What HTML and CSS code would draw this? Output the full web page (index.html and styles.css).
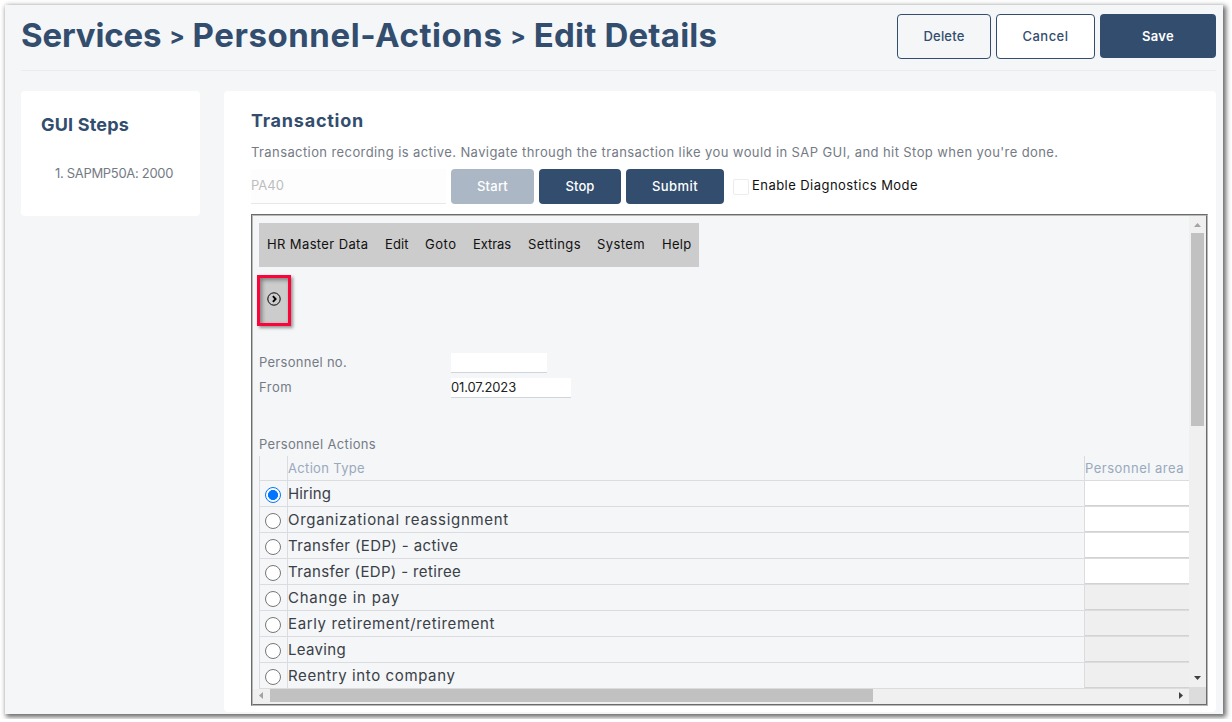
FILE: index.html
```
<!DOCTYPE html>
<html lang="en">
<head>
<meta charset="utf-8">
<title>Services - Personnel-Actions - Edit Details</title>
<link rel="stylesheet" href="styles.css">
</head>
<body>
<div class="window">
  <header class="page-header">
    <h1><span class="crumb-root">Services</span> <span class="sep">&gt;</span> <span class="crumb-section">Personnel-Actions</span> <span class="sep">&gt;</span> <span class="crumb-page">Edit Details</span></h1>
    <div class="header-actions">
      <button class="btn outline delete">Delete</button>
      <button class="btn outline cancel">Cancel</button>
      <button class="btn save">Save</button>
    </div>
  </header>
  <div class="columns">
    <aside class="card steps">
      <h2>GUI Steps</h2>
      <div class="step">1. SAPMP50A: 2000</div>
    </aside>
    <main class="card transaction">
      <h2>Transaction</h2>
      <p class="hint">Transaction recording is active. Navigate through the transaction like you would in SAP GUI, and hit Stop when you're done.</p>
      <div class="controls">
        <div class="code">PA40</div>
        <button class="btn small start">Start</button>
        <button class="btn small stop">Stop</button>
        <button class="btn small submit">Submit</button>
        <span class="checkbox"></span>
        <span class="check-label">Enable Diagnostics Mode</span>
      </div>
      <div class="frame">
        <div class="frame-inner">
          <div class="screen">
            <nav class="menu">
              <span class="m-hr">HR Master Data</span><span class="m-edit">Edit</span><span class="m-goto">Goto</span><span class="m-extras">Extras</span><span class="m-settings">Settings</span><span class="m-system">System</span><span class="m-help">Help</span>
            </nav>
            <div class="highlight">
              <svg width="14" height="14" viewBox="0 0 14 14" fill="none" stroke="#000"><circle cx="7" cy="7" r="6.2" stroke-width="1"/><path d="M5.900 4.200 8.600 7 5.900 9.800" stroke-width="1.9"/></svg>
            </div>
            <div class="field"><span class="no-label">Personnel no.</span><span class="input no"></span></div>
            <div class="field"><span class="from-label">From</span><span class="input date">01.07.2023</span></div>
            <div class="section">Personnel Actions</div>
            <div class="grid">
              <div class="row head"><span class="sel"></span><span class="type">Action Type</span><span class="area">Personnel area</span></div>
              <div class="row"><span class="sel"><i class="radio on"></i></span><span class="type t1">Hiring</span><span class="area open"></span></div>
              <div class="row"><span class="sel"><i class="radio"></i></span><span class="type t2">Organizational reassignment</span><span class="area open"></span></div>
              <div class="row"><span class="sel"><i class="radio"></i></span><span class="type t3">Transfer (EDP) - active</span><span class="area open"></span></div>
              <div class="row"><span class="sel"><i class="radio"></i></span><span class="type t4">Transfer (EDP) - retiree</span><span class="area open"></span></div>
              <div class="row"><span class="sel"><i class="radio"></i></span><span class="type t5">Change in pay</span><span class="area locked"></span></div>
              <div class="row"><span class="sel"><i class="radio"></i></span><span class="type t6">Early retirement/retirement</span><span class="area locked"></span></div>
              <div class="row"><span class="sel"><i class="radio"></i></span><span class="type t7">Leaving</span><span class="area locked"></span></div>
              <div class="row"><span class="sel"><i class="radio"></i></span><span class="type t8">Reentry into company</span><span class="area locked"></span></div>
            </div>
          </div>
          <div class="vbar">
            <svg width="17" height="17" viewBox="0 0 17 17"><path d="M5 11h7L8.500 7z" fill="#a3a3a3"/></svg>
            <div class="vthumb"></div>
            <svg width="17" height="17" viewBox="0 0 17 17"><path d="M5 6h7L8.500 10z" fill="#404040"/></svg>
          </div>
          <div class="hbar">
            <svg width="17" height="15" viewBox="0 0 17 15"><path d="M10 3v7L6 6.500z" fill="#a3a3a3"/></svg>
            <div class="hthumb"></div>
            <svg width="17" height="15" viewBox="0 0 17 15"><path d="M7 3v7l4-3.500z" fill="#404040"/></svg>
          </div>
          <div class="corner"></div>
        </div>
      </div>
    </main>
  </div>
</div>
</body>
</html>
```
FILE: styles.css
```
* { box-sizing: border-box; }
body { margin: 0; padding: 5px; background: #fff; font: 13px/20px Inter, sans-serif; color: #747b85; overflow: hidden; white-space: nowrap; }
.window { width: 1218px; height: 709px; padding: 0 7px 0 16px; background: #f4f6f8; box-shadow: 2px 2px 5px 1px rgba(0,0,0,.6); }
h1, h2, p { margin: 0; }
h1, h2 { color: #324d6e; font-weight: 700; }

.page-header { display: flex; justify-content: space-between; align-items: flex-start; height: 66px; padding-top: 9px; border-bottom: 1px solid #eaecef; }
h1 { font-size: 33px; line-height: 43px; }
.crumb-root { letter-spacing: -.15px; }
.crumb-section { letter-spacing: .55px; }
.crumb-page { letter-spacing: .2px; }
.sep { font-size: 23px; line-height: 20px; vertical-align: 3px; }
.header-actions { display: flex; gap: 5px; }
.btn { display: block; margin: 0; padding: 0; border: 0; border-radius: 4px; background: #324d6e; color: #fff; font: 500 13px/20px Inter, sans-serif; }
.outline { height: 45px; padding-bottom: 1px; border: 1px solid #324d6e; color: #324d6e; }
.delete { width: 94px; background: #f4f6f8; letter-spacing: .19px; }
.cancel { width: 99px; background: #fff; letter-spacing: .47px; }
.save { width: 116px; height: 44px; padding-bottom: 1px; font-weight: 600; letter-spacing: .31px; }

.columns { display: flex; justify-content: space-between; align-items: flex-start; padding-top: 20px; }
.card { background: #fff; border-radius: 4px; }
.steps { width: 179px; height: 125px; padding: 22px 20px; }
h2 { font-size: 18px; line-height: 24px; }
.steps h2 { letter-spacing: .18px; }
.step { margin-top: 26px; padding-left: 14px; letter-spacing: -.31px; }
.transaction { width: 992px; height: 621px; padding: 18px 8px 0 27px; }
.transaction h2 { letter-spacing: .77px; }
.hint { padding-top: 9px; letter-spacing: .405px; }

.controls { display: flex; align-items: center; height: 35px; margin-top: 7px; }
.code { width: 195px; height: 35px; margin-right: 5px; line-height: 33px; background: #fdfdfd; border-bottom: 1px solid #e8e8e8; color: #bcbdbf; }
.small { height: 35px; margin-right: 5px; padding-bottom: 1px; }
.start { width: 83px; background: #abb7c4; letter-spacing: .21px; }
.stop { width: 82px; letter-spacing: .1px; }
.submit { width: 98px; letter-spacing: .42px; }
.checkbox { width: 16px; height: 16px; margin: 0 3px 0 4px; border: 1px solid #ececec; border-radius: 2px; background: #fff; }
.check-label { padding-bottom: 3px; color: #111; letter-spacing: .45px; line-height: 18px; }

.frame { width: 957px; height: 492px; margin-top: 10px; border: 1px solid; border-color: #6c6c6c #b9b9b9 #b9b9b9 #6c6c6c; }
.frame-inner { display: grid; grid-template: 471px 17px / 936px 17px; width: 955px; height: 490px; border: 1px solid; border-color: #b9b9b9 #6c6c6c #6c6c6c #b9b9b9; }
.screen { height: 473px; padding: 7px 0 0 6px; overflow: hidden; background: #f4f6f8; }
.menu { display: flex; width: 440px; height: 44px; padding-left: 8px; background: #ccc; color: #111; line-height: 43px; }
.m-hr { width: 118px; letter-spacing: .38px; }
.m-edit { width: 40px; letter-spacing: .08px; }
.m-goto { width: 48px; letter-spacing: .52px; }
.m-extras { width: 55px; letter-spacing: -.08px; }
.m-settings { width: 69px; letter-spacing: .4px; }
.m-system { width: 65px; letter-spacing: .4px; }
.m-help { letter-spacing: .29px; }
.highlight { display: flex; justify-content: center; align-items: center; width: 34px; height: 51px; margin: 8px 0 27px -2px; padding-bottom: 3px; border: 3px solid #fb0439; background: #ccc; box-shadow: 2px 2px 3px rgba(0,0,0,.4), inset 2px 2px 4px rgba(0,0,0,.4); }
.field { display: flex; height: 20px; margin-bottom: 5px; line-height: 19px; }
.no-label, .from-label { width: 192px; }
.no-label { letter-spacing: .28px; }
.from-label { letter-spacing: .46px; }
.input { height: 20px; border-bottom: 1px solid #d0d5dc; background: #fff; color: #222; }
.no { width: 96px; }
.date { width: 120px; letter-spacing: -.14px; }
.section { height: 22px; margin-top: 36px; letter-spacing: .34px; }
.grid { width: 940px; border-left: 1px solid #dadcdf; }
.row { display: grid; grid-template-columns: 28px 797px 115px; height: 26px; border-bottom: 1px solid #dadcdf; color: #3a4046; font-size: 15px; line-height: 25px; }
.head { height: 25px; color: #9aa9bc; font-size: 13px; line-height: 24px; }
.sel, .type { border-right: 1px solid #dadcdf; }
.sel { display: flex; padding: 6px 0 0 5px; }
.radio { width: 16px; height: 16px; border: 1px solid #767676; border-radius: 50%; background: #fff; }
.radio.on { border: 1px solid #0075ff; background: radial-gradient(circle, #0075ff 4.700px, #fff 5.300px); }
.head .type { letter-spacing: .33px; }
.head .area { letter-spacing: .49px; }
.open { border-bottom: 1px solid #d2d2d2; background: #fff; }
.locked { border-bottom: 1px solid #d2d2d2; background: #efefef; }
.t1 { letter-spacing: .11px; }
.t2 { letter-spacing: .69px; }
.t3 { letter-spacing: .39px; }
.t4 { letter-spacing: .35px; }
.t5 { letter-spacing: .77px; }
.t6 { letter-spacing: .63px; }
.t7 { letter-spacing: .33px; }
.t8 { letter-spacing: .61px; }

.vbar { display: flex; flex-direction: column; background: #f0f0f0; }
.vbar svg, .hbar svg { display: block; flex: none; }
.vthumb { width: 13px; height: 193px; margin: 0 2px auto; background: #c1c1c1; }
.hbar { display: flex; height: 15px; margin-top: 2px; background: #f0f0f0; z-index: 1; }
.hthumb { width: 603px; height: 13px; margin-right: auto; background: #c1c1c1; }
.corner { background: #dcdcdc; }
```
